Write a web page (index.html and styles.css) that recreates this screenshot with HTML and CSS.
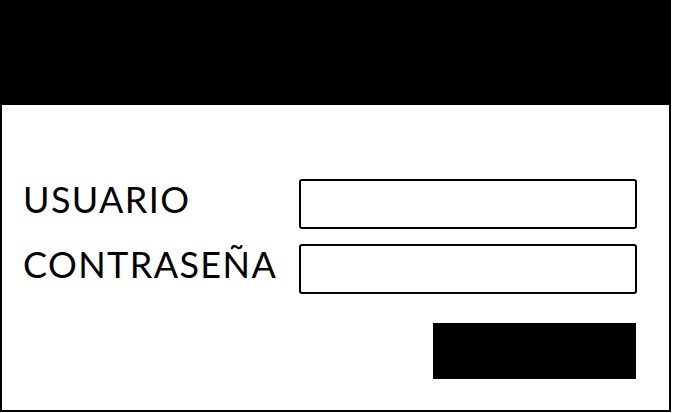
FILE: index.html
```html
<!DOCTYPE html>
<html lang="es">
<head>
<meta charset="utf-8">
<title>Login</title>
<link rel="stylesheet" href="styles.css">
</head>
<body>
<div class="card">
  <div class="header"></div>
  <form class="form">
    <label class="label" for="user">USUARIO</label>
    <input class="field" id="user" type="text">
    <label class="label" for="pass">CONTRASEÑA</label>
    <input class="field" id="pass" type="password">
    <button class="submit" type="button"></button>
  </form>
</div>
</body>
</html>
```
FILE: styles.css
```css
html, body {
  margin: 0;
  padding: 0;
  background: #fff;
}
.card {
  box-sizing: border-box;
  width: 671px;
  height: 412px;
  border: 2px solid #000;
  border-top: 0;
  background: #fff;
  font-family: Lato, "Noto Sans", sans-serif;
}
.header {
  height: 105px;
  margin: 0 -2px;
  background: #000;
}
.form {
  display: grid;
  grid-template-columns: 276px 338px;
  grid-auto-rows: 50px;
  row-gap: 15px;
  padding: 74px 0 0 21px;
  margin: 0;
}
.label {
  display: flex;
  align-items: center;
  font-size: 36px;
  letter-spacing: 1.4px;
  color: #000;
  padding-bottom: 10px;
}
.field {
  box-sizing: border-box;
  width: 338px;
  height: 50px;
  margin: 0;
  border: 2px solid #000;
  border-radius: 3px;
  background: #fff;
  outline: none;
}
.submit {
  grid-column: 2;
  justify-self: end;
  width: 203px;
  height: 56px;
  margin: 14px 1px 0 0;
  border: 0;
  background: #000;
}
```
